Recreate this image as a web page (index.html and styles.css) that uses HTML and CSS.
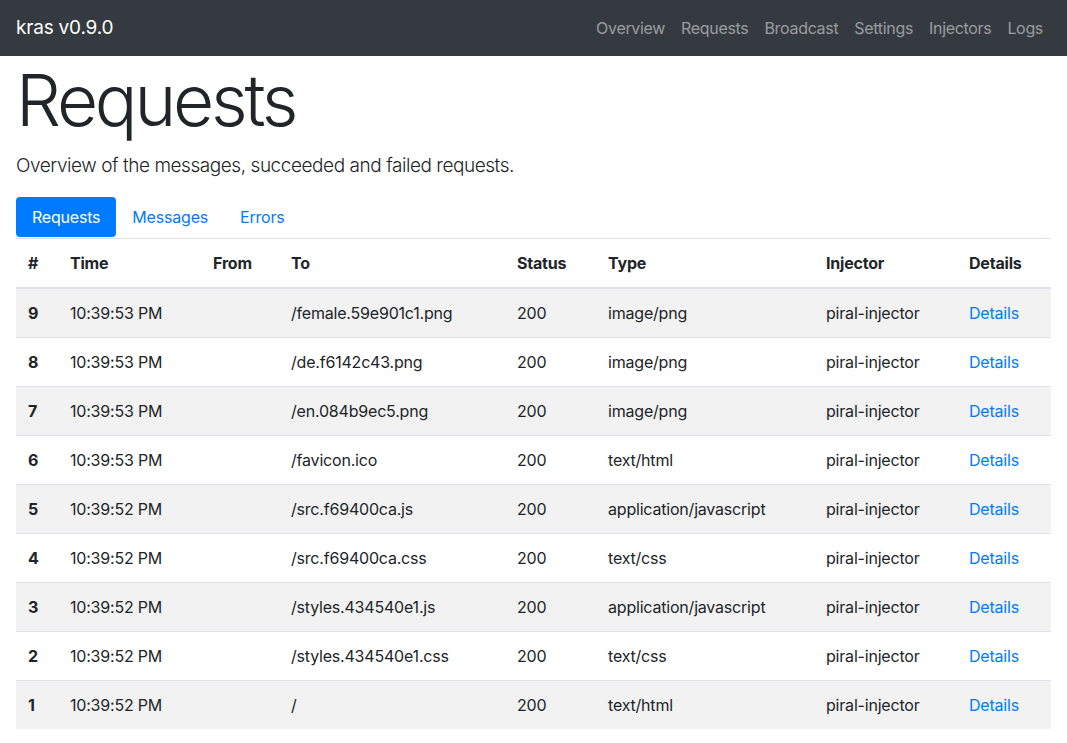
FILE: index.html
```html
<!DOCTYPE html>
<html lang="en">
<head>
<meta charset="utf-8">
<title>kras</title>
<link rel="stylesheet" href="styles.css">
</head>
<body>
<nav class="navbar">
  <a class="brand" href="#">kras v0.9.0</a>
  <ul class="nav-links">
    <li><a href="#">Overview</a></li>
    <li><a href="#">Requests</a></li>
    <li><a href="#">Broadcast</a></li>
    <li><a href="#">Settings</a></li>
    <li><a href="#">Injectors</a></li>
    <li><a href="#">Logs</a></li>
  </ul>
</nav>
<main class="container">
  <h1 class="display">Requests</h1>
  <p class="lead">Overview of the messages, succeeded and failed requests.</p>
  <ul class="pills">
    <li><a class="pill active" href="#">Requests</a></li>
    <li><a class="pill" href="#">Messages</a></li>
    <li><a class="pill" href="#">Errors</a></li>
  </ul>
  <table class="table">
    <colgroup>
      <col class="c-num"><col class="c-time"><col class="c-from"><col class="c-to"><col class="c-status"><col class="c-type"><col class="c-inj"><col class="c-det">
    </colgroup>
    <thead>
      <tr><th>#</th><th>Time</th><th>From</th><th>To</th><th>Status</th><th>Type</th><th>Injector</th><th>Details</th></tr>
    </thead>
    <tbody>
      <tr><th>9</th><td>10:39:53 PM</td><td></td><td>/female.59e901c1.png</td><td>200</td><td>image/png</td><td>piral-injector</td><td><a href="#">Details</a></td></tr>
      <tr><th>8</th><td>10:39:53 PM</td><td></td><td>/de.f6142c43.png</td><td>200</td><td>image/png</td><td>piral-injector</td><td><a href="#">Details</a></td></tr>
      <tr><th>7</th><td>10:39:53 PM</td><td></td><td>/en.084b9ec5.png</td><td>200</td><td>image/png</td><td>piral-injector</td><td><a href="#">Details</a></td></tr>
      <tr><th>6</th><td>10:39:53 PM</td><td></td><td>/favicon.ico</td><td>200</td><td>text/html</td><td>piral-injector</td><td><a href="#">Details</a></td></tr>
      <tr><th>5</th><td>10:39:52 PM</td><td></td><td>/src.f69400ca.js</td><td>200</td><td>application/javascript</td><td>piral-injector</td><td><a href="#">Details</a></td></tr>
      <tr><th>4</th><td>10:39:52 PM</td><td></td><td>/src.f69400ca.css</td><td>200</td><td>text/css</td><td>piral-injector</td><td><a href="#">Details</a></td></tr>
      <tr><th>3</th><td>10:39:52 PM</td><td></td><td>/styles.434540e1.js</td><td>200</td><td>application/javascript</td><td>piral-injector</td><td><a href="#">Details</a></td></tr>
      <tr><th>2</th><td>10:39:52 PM</td><td></td><td>/styles.434540e1.css</td><td>200</td><td>text/css</td><td>piral-injector</td><td><a href="#">Details</a></td></tr>
      <tr><th>1</th><td>10:39:52 PM</td><td></td><td>/</td><td>200</td><td>text/html</td><td>piral-injector</td><td><a href="#">Details</a></td></tr>
    </tbody>
  </table>
</main>
</body>
</html>
```
FILE: styles.css
```css
* { box-sizing: border-box; }
html, body { margin: 0; padding: 0; }
body {
  font-family: Inter, "Noto Sans", "Liberation Sans", sans-serif;
  font-size: 16px;
  line-height: 1.5;
  color: #212529;
  background: #fff;
}
a { text-decoration: none; color: #007bff; }

.navbar {
  height: 56px;
  background: #343a40;
  padding: 8px 16px;
  display: flex;
  align-items: center;
  justify-content: space-between;
}
.brand {
  color: #fff;
  font-size: 19px;
  line-height: 30px;
  padding: 5px 0;
  letter-spacing: -0.2px;
}
.nav-links {
  list-style: none;
  margin: 0;
  padding: 0;
  display: flex;
}
.nav-links a {
  display: block;
  padding: 8px;
  color: rgba(255,255,255,0.5);
  line-height: 24px;
  letter-spacing: -0.32px;
}

.container { padding: 1px 16px 0; }
.display {
  font-size: 71px;
  font-weight: 300;
  line-height: 86px;
  margin: 0 0 8px;
  letter-spacing: -3.2px;
}
.lead {
  font-size: 19px;
  font-weight: 300;
  line-height: 30px;
  margin: 0 0 16px;
  letter-spacing: -0.45px;
}
.pills {
  list-style: none;
  margin: 0 0 1px;
  padding: 0;
  display: flex;
}
.pill {
  display: block;
  padding: 8px 16px;
  line-height: 24px;
  border-radius: 4px;
  letter-spacing: -0.2px;
}
.pill.active { background: #007bff; color: #fff; }

.table {
  width: 100%;
  border-collapse: collapse;
  table-layout: fixed;
}
.c-num { width: 42px; }
.c-time { width: 143px; }
.c-from { width: 78px; }
.c-to { width: 226px; }
.c-status { width: 91px; }
.c-type { width: 218px; }
.c-inj { width: 143px; }
.c-det { width: 94px; }
.table th, .table td {
  padding: 12px;
  text-align: left;
  vertical-align: top;
  border-top: 1px solid #dee2e6;
  line-height: 24px;
  letter-spacing: -0.2px;
  white-space: nowrap;
}
.table th { font-weight: 700; }
.table thead th { border-bottom: 2px solid #dee2e6; }
.table tbody tr:nth-child(odd) { background: rgba(0,0,0,0.05); }
```
